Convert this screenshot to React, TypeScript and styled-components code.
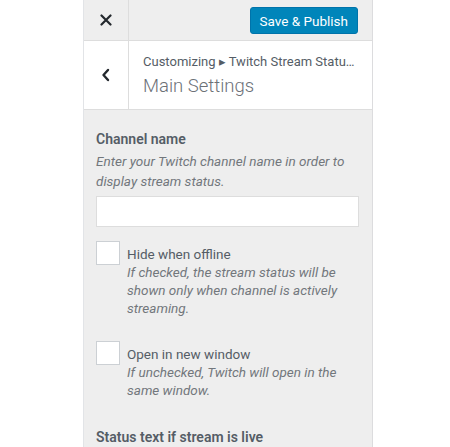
import React from 'react'
import styled, { createGlobalStyle } from 'styled-components'

const GlobalStyle = createGlobalStyle`
  html, body {
    margin: 0;
    padding: 0;
    background: #fff;
    font-family: Roboto, "Liberation Sans", Arial, sans-serif;
    color: #555d66;
  }
`

const Page = styled.div`
  height: 447px;
  overflow: hidden;
  padding-left: 83px;
`

const Panel = styled.div`
  width: 290px;
  height: 447px;
  background: #eee;
  border-left: 1px solid #e2e4e7;
  border-right: 1px solid #dcdcde;
  box-sizing: border-box;
  display: flex;
  flex-direction: column;
`

const TopBar = styled.div`
  height: 42px;
  display: flex;
  align-items: center;
  border-bottom: 1px solid #ddd;
  box-sizing: border-box;
`

const IconCell = styled.div`
  width: 45px;
  height: 100%;
  display: flex;
  align-items: center;
  justify-content: center;
  border-right: 1px solid #ddd;
  box-sizing: border-box;
  color: #23282d;
`

const Spacer = styled.div`
  flex: 1;
`

const PublishButton = styled.button`
  height: 27px;
  padding: 0 9px;
  margin-right: 14px;
  margin-top: 1px;
  background: #0085ba;
  border: 1px solid #0073aa;
  border-radius: 3px;
  color: #fff;
  font-family: inherit;
  font-size: 13.5px;
`

const SectionHead = styled.div`
  height: 70px;
  display: flex;
  background: #fff;
  border-bottom: 1px solid #ddd;
  box-sizing: border-box;
`

const Titles = styled.div`
  flex: 1;
  padding: 13px 10px 0 14px;
  min-width: 0;
`

const Crumb = styled.div`
  font-size: 13px;
  color: #555d66;
  white-space: nowrap;
`

const Title = styled.div`
  font-size: 18.5px;
  font-weight: 300;
  color: #6c7177;
  margin-top: 6px;
`

const Content = styled.div`
  padding: 19px 13px 0 12px;
`

const Label = styled.div<{ $top?: number }>`
  font-size: 14px;
  font-weight: 600;
  color: #555d66;
  line-height: 20px;
  margin-top: ${({ $top }) => $top ?? 0}px;
`

const Help = styled.div<{ $tight?: boolean }>`
  font-size: 13.5px;
  font-style: italic;
  color: #72777c;
  line-height: ${({ $tight }) => ($tight ? '18px' : '20px')};
  margin-top: ${({ $tight }) => ($tight ? 0 : 2)}px;
`

const TextInput = styled.input`
  display: block;
  width: 100%;
  height: 31px;
  box-sizing: border-box;
  margin-top: 5px;
  border: 1px solid #ddd;
  background: #fff;
`

const CheckRow = styled.div<{ $gap: number }>`
  display: flex;
  gap: 7px;
  margin-top: ${({ $gap }) => $gap}px;
`

const Box = styled.div`
  width: 24px;
  height: 24px;
  flex: none;
  background: #fff;
  border: 1px solid #ccd0d4;
  box-sizing: border-box;
`

const CheckText = styled.div`
  padding-top: 4px;
`

const CheckLabel = styled.div`
  font-size: 13.5px;
  color: #555d66;
  line-height: 18px;
`

export default function App() {
  return (
    <Page>
      <GlobalStyle />
      <Panel>
        <TopBar>
          <IconCell>
            <svg width="12" height="12" viewBox="0 0 12 12">
              <path d="M1.5 1.5l9 9M10.5 1.5l-9 9" stroke="#23282d" strokeWidth="2.2" strokeLinecap="round" />
            </svg>
          </IconCell>
          <Spacer />
          <PublishButton>Save &amp; Publish</PublishButton>
        </TopBar>
        <SectionHead>
          <IconCell>
            <svg width="10" height="14" viewBox="0 0 10 14">
              <path d="M7 2L2.5 7 7 12" fill="none" stroke="#23282d" strokeWidth="2.4" strokeLinecap="round" strokeLinejoin="round" />
            </svg>
          </IconCell>
          <Titles>
            <Crumb>Customizing ▸ Twitch Stream Statu…</Crumb>
            <Title>Main Settings</Title>
          </Titles>
        </SectionHead>
        <Content>
          <Label>Channel name</Label>
          <Help>Enter your Twitch channel name in order to display stream status.</Help>
          <TextInput type="text" />
          <CheckRow $gap={14}>
            <Box />
            <CheckText>
              <CheckLabel>Hide when offline</CheckLabel>
              <Help $tight>If checked, the stream status will be shown only when channel is actively streaming.</Help>
            </CheckText>
          </CheckRow>
          <CheckRow $gap={24}>
            <Box />
            <CheckText>
              <CheckLabel>Open in new window</CheckLabel>
              <Help $tight>If unchecked, Twitch will open in the same window.</Help>
            </CheckText>
          </CheckRow>
          <Label $top={28}>Status text if stream is live</Label>
        </Content>
      </Panel>
    </Page>
  )
}
